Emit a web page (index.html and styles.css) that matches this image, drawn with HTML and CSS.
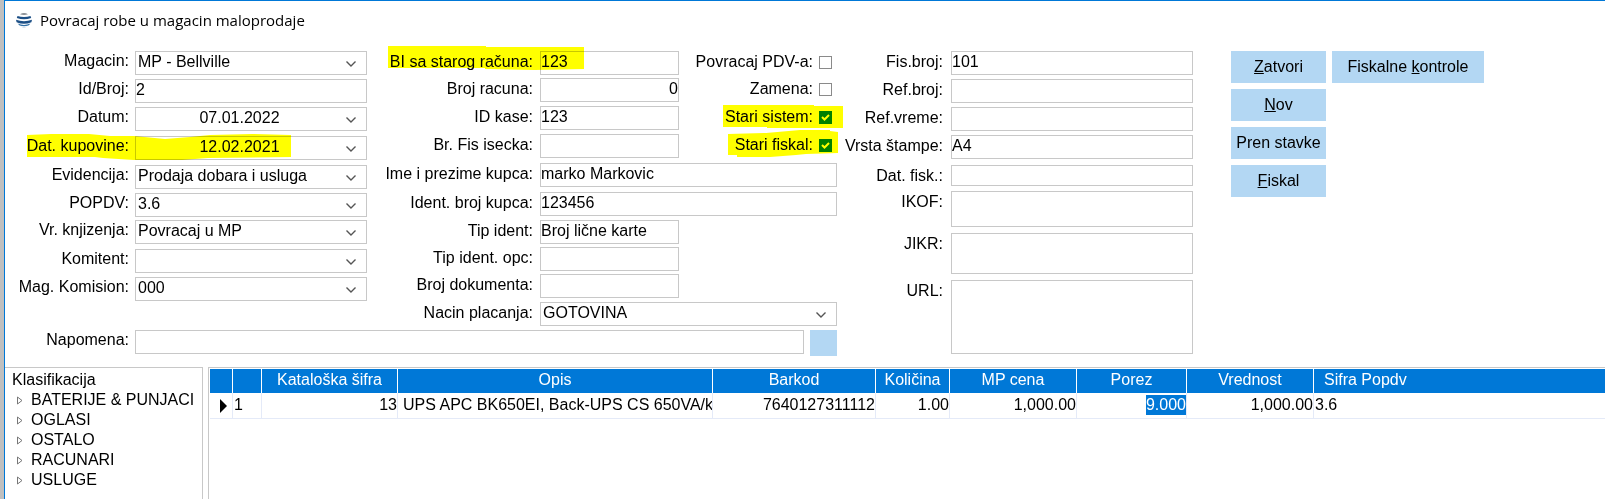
FILE: index.html
```html
<!DOCTYPE html>
<html lang="sr">
  <head>
    <meta charset="UTF-8" />
    <meta name="viewport" content="width=device-width, initial-scale=1.0" />
    <title>Povracaj robe u magacin maloprodaje</title>
    <link rel="stylesheet" href="styles.css">
  </head>
  <body>
    <div class="window">
      <header class="titlebar">
        <svg class="logo" width="16" height="16" viewBox="0 0 16 16">
          <path d="M4 2.2 Q8 -0.2 12 2.2 Q8 3.6 4 2.2Z" fill="#8a8f94" />
          <path d="M1.5 4 Q8 6.2 14.5 4 L15.2 6 Q8 8.6 0.8 6Z" fill="#1c4f86" />
          <path d="M0 7.8 Q8 10.6 16 7.8 L15.4 10.2 Q8 13.2 0.6 10.2Z" fill="#1c4f86" />
          <path d="M1.6 11.6 Q8 14.4 14.4 11.6 Q13.4 13.2 12.4 13.6 Q8 15 3.6 13.6Z" fill="#2f6ea5" />
          <path d="M4.5 14.6 Q8 15.6 11.5 14.6 Q8 16.6 4.5 14.6Z" fill="#a9c3d8" />
        </svg>
        <h1>Povracaj robe u magacin maloprodaje</h1>
      </header>

      <form class="form">
        <div class="main-fields">
          <div class="columns">
            <div class="column document">
              <div class="field">
                <label for="magacin">Magacin:</label>
                <select id="magacin"><option>MP - Bellville</option></select>
              </div>
              <div class="field">
                <label for="idBroj">Id/Broj:</label>
                <input type="text" id="idBroj" value="2" />
              </div>
              <div class="field">
                <label for="datum">Datum:</label>
                <select id="datum" class="date"><option>07.01.2022</option></select>
              </div>
              <div class="field">
                <label for="datKupovine">Dat. kupovine:</label>
                <select id="datKupovine" class="date"><option>12.02.2021</option></select>
                <svg class="marker marker-date" width="264" height="26" viewBox="0 0 264 26">
                  <polygon points="0,1 24,0 62,0 83,2 107,2 138,5 163,3 183,1 225,0 264,1 264,23 181,24 155,26 107,26 76,24 68,23 0,23" />
                </svg>
              </div>
              <div class="field">
                <label for="evidencija">Evidencija:</label>
                <select id="evidencija"><option>Prodaja dobara i usluga</option></select>
              </div>
              <div class="field">
                <label for="popdv">POPDV:</label>
                <select id="popdv"><option>3.6</option></select>
              </div>
              <div class="field">
                <label for="knjizenje">Vr. knjizenja:</label>
                <select id="knjizenje"><option>Povracaj u MP</option></select>
              </div>
              <div class="field">
                <label for="komitent">Komitent:</label>
                <select id="komitent"><option></option></select>
              </div>
              <div class="field">
                <label for="komision">Mag. Komision:</label>
                <select id="komision"><option>000</option></select>
              </div>
            </div>

            <div class="column buyer">
              <div class="field">
                <label for="stariBI">BI sa starog računa:</label>
                <input type="text" id="stariBI" class="short" value="123" />
                <svg class="marker marker-bill" width="196" height="24" viewBox="0 0 196 24">
                  <polygon points="0,0 98,0 98,1 196,1 196,23 147,24 97,23 97,22 0,22" />
                </svg>
                <label for="pdv" class="check-label">Povracaj PDV-a:</label>
                <input type="checkbox" id="pdv" />
              </div>
              <div class="field">
                <label for="brojRacuna">Broj racuna:</label>
                <input type="text" id="brojRacuna" class="short number" value="0" />
                <label for="zamena" class="check-label">Zamena:</label>
                <input type="checkbox" id="zamena" />
              </div>
              <div class="field">
                <label for="idKase">ID kase:</label>
                <input type="text" id="idKase" class="short" value="123" />
                <label for="stariSistem" class="check-label">Stari sistem:</label>
                <input type="checkbox" id="stariSistem" checked />
                <svg class="marker marker-system" width="120" height="23" viewBox="0 0 120 23">
                  <polygon points="0,0 91,0 91,1 120,1 120,23 44,23 44,22 0,22" />
                </svg>
              </div>
              <div class="field">
                <label for="isecak">Br. Fis isecka:</label>
                <input type="text" id="isecak" class="short" />
                <label for="stariFiskal" class="check-label">Stari fiskal:</label>
                <input type="checkbox" id="stariFiskal" checked />
                <svg class="marker marker-fiscal" width="110" height="27" viewBox="0 0 110 27">
                  <polygon points="0,4 38,3 72,0 102,0 102,1 110,2 110,23 78,24 68,25 42,27 9,27 9,25 0,25" />
                </svg>
              </div>
              <div class="field">
                <label for="kupac">Ime i prezime kupca:</label>
                <input type="text" id="kupac" value="marko Markovic" />
              </div>
              <div class="field">
                <label for="identBroj">Ident. broj kupca:</label>
                <input type="text" id="identBroj" value="123456" />
              </div>
              <div class="field">
                <label for="tipIdent">Tip ident:</label>
                <input type="text" id="tipIdent" class="short" value="Broj lične karte" />
              </div>
              <div class="field">
                <label for="tipOpc">Tip ident. opc:</label>
                <input type="text" id="tipOpc" class="short" />
              </div>
              <div class="field">
                <label for="brojDok">Broj dokumenta:</label>
                <input type="text" id="brojDok" class="short" />
              </div>
              <div class="field">
                <label for="placanje">Nacin placanja:</label>
                <select id="placanje"><option>GOTOVINA</option></select>
              </div>
            </div>
          </div>

          <div class="field note">
            <label for="napomena">Napomena:</label>
            <input type="text" id="napomena" />
            <button type="button" class="note-button" aria-label="Napomena"></button>
          </div>
        </div>

        <div class="column fiscal">
          <div class="field">
            <label for="fisBroj">Fis.broj:</label>
            <input type="text" id="fisBroj" value="101" />
          </div>
          <div class="field">
            <label for="refBroj">Ref.broj:</label>
            <input type="text" id="refBroj" />
          </div>
          <div class="field">
            <label for="refVreme">Ref.vreme:</label>
            <input type="text" id="refVreme" />
          </div>
          <div class="field">
            <label for="stampa">Vrsta štampe:</label>
            <input type="text" id="stampa" value="A4" />
          </div>
          <div class="field">
            <label for="datFisk">Dat. fisk.:</label>
            <input type="text" id="datFisk" class="low" />
          </div>
          <div class="field">
            <label for="ikof">IKOF:</label>
            <textarea id="ikof"></textarea>
          </div>
          <div class="field">
            <label for="jikr">JIKR:</label>
            <textarea id="jikr"></textarea>
          </div>
          <div class="field">
            <label for="url">URL:</label>
            <textarea id="url"></textarea>
          </div>
        </div>

        <div class="actions">
          <div class="action-list">
            <button type="button"><u>Z</u>atvori</button>
            <button type="button"><u>N</u>ov</button>
            <button type="button">Pren stavke</button>
            <button type="button"><u>F</u>iskal</button>
          </div>
          <button type="button" class="wide">Fiskalne <u>k</u>ontrole</button>
        </div>
      </form>

      <div class="bottom">
        <nav class="tree">
          <h2>Klasifikacija</h2>
          <ul>
            <li>BATERIJE &amp; PUNJACI</li>
            <li>OGLASI</li>
            <li>OSTALO</li>
            <li>RACUNARI</li>
            <li>USLUGE</li>
          </ul>
        </nav>

        <div class="items">
          <table>
            <colgroup>
              <col class="col-pointer" />
              <col class="col-index" />
              <col class="col-code" />
              <col class="col-name" />
              <col class="col-barcode" />
              <col class="col-qty" />
              <col class="col-price" />
              <col class="col-tax" />
              <col class="col-value" />
              <col />
            </colgroup>
            <thead>
              <tr>
                <th></th>
                <th></th>
                <th>Kataloška šifra</th>
                <th>Opis</th>
                <th>Barkod</th>
                <th>Količina</th>
                <th>MP cena</th>
                <th>Porez</th>
                <th>Vrednost</th>
                <th class="left">Sifra Popdv</th>
              </tr>
            </thead>
            <tbody>
              <tr>
                <td class="pointer">
                  <svg width="7" height="14" viewBox="0 0 7 14"><path d="M0 0 L7 7 L0 14Z" /></svg>
                </td>
                <td>1</td>
                <td class="number">13</td>
                <td class="name">UPS APC BK650EI, Back-UPS CS 650VA/k</td>
                <td class="number">7640127311112</td>
                <td class="number">1.00</td>
                <td class="number">1,000.00</td>
                <td class="number"><span class="selected">9.000</span></td>
                <td class="number">1,000.00</td>
                <td>3.6</td>
              </tr>
            </tbody>
          </table>
        </div>
      </div>
    </div>
  </body>
</html>
```

FILE: styles.css
```css
* {
  box-sizing: border-box;
}

body {
  margin: 0;
  background: #c0c0c0;
  color: #000;
  font: 16px/20px "Liberation Sans", Arial, sans-serif;
}

.window {
  display: flex;
  flex-direction: column;
  min-height: 100vh;
  margin-left: 4px;
  border-top: 1px solid #0078d7;
  border-left: 1px solid #0078d7;
  background: #fff;
}

.titlebar {
  display: flex;
  align-items: center;
  gap: 8px;
  height: 38px;
  padding-left: 11px;
}

h1 {
  margin: 0;
  font: 15px/20px "Open Sans", "Noto Sans", sans-serif;
}

input,
select,
textarea,
button {
  margin: 0;
  border-radius: 0;
  color: inherit;
  font: inherit;
}

/* form */

.form {
  display: flex;
  align-items: flex-start;
  padding: 12px 0 11px;
}

.columns {
  display: flex;
}

.column {
  display: grid;
}

.document {
  width: 362px;
  grid-template-rows: 28px 28px 29px 29px 28px 27px 29px 28px 24px;
}

.buyer {
  width: 470px;
  grid-template-rows: 27px 28px 28px 29px 29px 28px 27px 27px 28px 27px;
}

.fiscal {
  width: 356px;
  grid-template-rows: 28px 28px 28px 30px 26px 42px 47px 74px;
}

.field {
  position: relative;
  display: flex;
  align-items: flex-start;
}

.field label {
  flex: none;
  width: 124px;
  margin-right: 6px;
  text-align: right;
  white-space: nowrap;
}

.buyer label {
  width: 166px;
  margin-right: 7px;
  padding-top: 1px;
}

.fiscal label {
  width: 106px;
  margin-right: 8px;
  padding-top: 1px;
}

.field input[type="text"],
select,
textarea {
  flex: 1;
  min-width: 0;
  height: 24px;
  padding: 0 0 3px;
  border: 1px solid #c8c8c8;
  background: #fff;
  outline: none;
}

select {
  appearance: none;
  background: #fff url("data:image/svg+xml,%3Csvg xmlns='http://www.w3.org/2000/svg' width='10' height='6'%3E%3Cpath d='M0.5 0.5 L5 5 L9.5 0.5' fill='none' stroke='%23555' stroke-width='1.4'/%3E%3C/svg%3E") no-repeat right 10px top 9px;
}

.field select {
  padding: 0 25px 3px 2px;
}

.date {
  text-align: center;
  text-align-last: center;
}

textarea {
  align-self: stretch;
  height: auto;
  margin-bottom: 6px;
  resize: none;
}

.field:last-child textarea {
  margin-bottom: 0;
}

.field input.short {
  flex: none;
  width: 139px;
}

.field input.low {
  height: 21px;
}

.number {
  text-align: right;
}

.field .check-label {
  width: auto;
  margin-left: auto;
  margin-right: 6px;
}

input[type="checkbox"] {
  appearance: none;
  width: 13px;
  height: 13px;
  margin: 5px 5px 0 0;
  border: 1px solid #8a8a8a;
  background: #fff;
}

input[type="checkbox"]:checked {
  border-color: #008000;
  background: #008000 url("data:image/svg+xml,%3Csvg xmlns='http://www.w3.org/2000/svg' width='11' height='11'%3E%3Cpath d='M2 5 L4.5 7.5 L9 3' fill='none' stroke='%23fff' stroke-width='2'/%3E%3C/svg%3E") no-repeat center;
}

.note {
  margin-top: 1px;
}

.note input[type="text"] {
  margin-right: 6px;
}

/* highlighter strokes over the fields */

.marker {
  position: absolute;
  fill: #ff0;
  mix-blend-mode: multiply;
  pointer-events: none;
}

.marker-date {
  left: 22px;
  top: -2px;
}

.marker-bill {
  left: 21px;
  top: -5px;
}

.marker-system {
  right: -6px;
  top: -1px;
}

.marker-fiscal {
  right: -1px;
  top: -4px;
}

/* buttons */

button {
  width: 95px;
  height: 32px;
  padding: 0;
  border: none;
  background: #b3d7f3;
  white-space: nowrap;
}

.actions {
  display: flex;
  align-items: flex-start;
  gap: 6px;
  margin-left: 38px;
}

.action-list {
  display: flex;
  flex-direction: column;
  gap: 6px;
}

.wide {
  width: 152px;
}

.note-button {
  width: 27px;
  height: 26px;
}

/* tree and items */

.bottom {
  display: flex;
  flex: 1;
  gap: 5px;
}

.tree {
  width: 198px;
  padding: 2px 0 0 7px;
  border-top: 1px solid #c8c8c8;
  border-right: 1px solid #c8c8c8;
}

h2 {
  margin: 0;
  font-size: 16px;
  font-weight: normal;
}

ul {
  margin: 0;
  padding: 0;
  list-style: none;
}

li {
  padding-left: 19px;
  background: url("data:image/svg+xml,%3Csvg xmlns='http://www.w3.org/2000/svg' width='6' height='9'%3E%3Cpath d='M0.5 1 L5 4.5 L0.5 8Z' fill='none' stroke='%23777'/%3E%3C/svg%3E") no-repeat 5px 6px;
  font-size: 15px;
  white-space: nowrap;
}

.items {
  flex: 1;
  min-width: 0;
  padding: 1px 0 0 1px;
  border-top: 1px solid #c8c8c8;
  border-left: 1px solid #c8c8c8;
}

table {
  width: 100%;
  table-layout: fixed;
  border-collapse: separate;
  border-spacing: 0;
}

.col-pointer { width: 23px; }
.col-index { width: 29px; }
.col-code { width: 136px; }
.col-name { width: 315px; }
.col-barcode { width: 163px; }
.col-qty { width: 74px; }
.col-price { width: 127px; }
.col-tax { width: 110px; }
.col-value { width: 127px; }

th {
  height: 24px;
  padding: 0 0 2px;
  border-right: 1px solid #fff;
  background: #0078d7;
  color: #fff;
  font-weight: normal;
}

td {
  height: 26px;
  padding: 0 0 2px 1px;
  overflow: hidden;
  border-right: 1px solid #e4eaf8;
  border-bottom: 1px solid #e4eaf8;
  white-space: nowrap;
}

th:last-child,
td:last-child {
  border-right: none;
}

th.left {
  padding-left: 10px;
  text-align: left;
}

td.name {
  padding-left: 5px;
}

td.pointer {
  padding: 0 0 0 10px;
  line-height: 0;
}

li {
  font-size: 16px;
}

.selected {
  display: inline-block;
  height: 20px;
  background: #0078d7;
  color: #fff;
}
```
